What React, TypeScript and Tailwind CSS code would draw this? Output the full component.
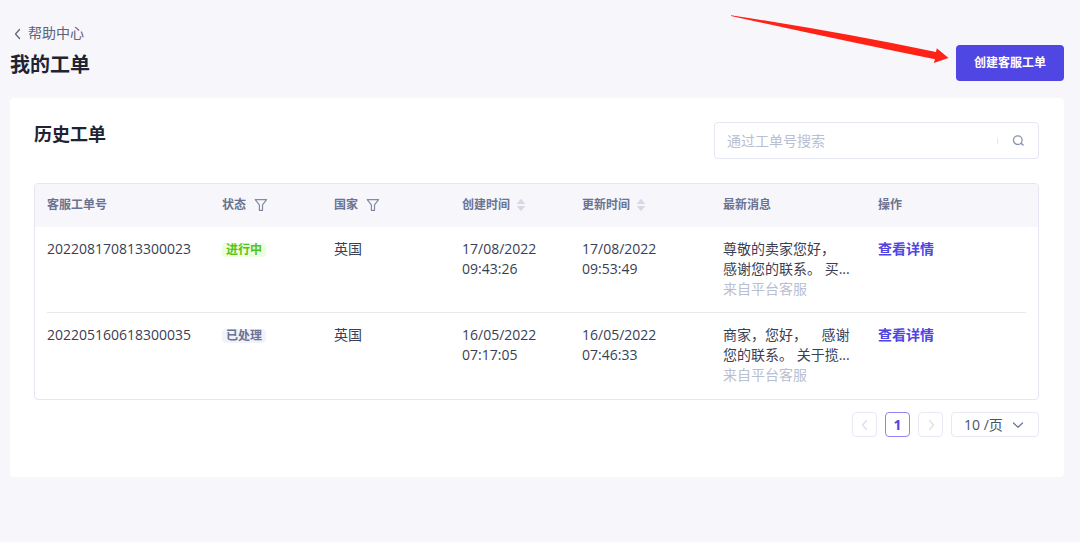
import { useState } from "react";

interface Ticket {
  id: string;
  status: "processing" | "done";
  country: string;
  created: [string, string];
  updated: [string, string];
  message: [string, string];
  source: string;
}

const TICKETS: Ticket[] = [
  {
    id: "202208170813300023",
    status: "processing",
    country: "英国",
    created: ["17/08/2022", "09:43:26"],
    updated: ["17/08/2022", "09:53:49"],
    message: ["尊敬的卖家您好，", "感谢您的联系。 买..."],
    source: "来自平台客服",
  },
  {
    id: "202205160618300035",
    status: "done",
    country: "英国",
    created: ["16/05/2022", "07:17:05"],
    updated: ["16/05/2022", "07:46:33"],
    message: ["商家，您好，    感谢", "您的联系。 关于揽..."],
    source: "来自平台客服",
  },
];

function FilterIcon() {
  return (
    <svg
      width="14"
      height="14"
      viewBox="0 0 14 14"
      className="text-[#838aa3]"
      fill="none"
      stroke="currentColor"
      strokeWidth="1.2"
      strokeLinejoin="round"
    >
      <path d="M1.2 1.6h11.4L8.5 6.8v5.6H5.4V6.8z" />
    </svg>
  );
}

function SortIcon() {
  return (
    <svg width="10" height="14" viewBox="0 0 10 14" className="text-[#d6d8e3]" fill="currentColor">
      <path d="M5 .8 9 5.4a.3.3 0 0 1-.2.5H1.2a.3.3 0 0 1-.2-.5z" />
      <path d="M5 13.2 9 8.6a.3.3 0 0 0-.2-.5H1.2a.3.3 0 0 0-.2.5z" />
    </svg>
  );
}

function Chevron({ d, className }: { d: string; className?: string }) {
  return (
    <svg
      width="12"
      height="12"
      viewBox="0 0 12 12"
      className={className}
      fill="none"
      stroke="currentColor"
      strokeWidth="1.2"
      strokeLinecap="round"
      strokeLinejoin="round"
    >
      <path d={d} />
    </svg>
  );
}

function StatusTag({ status }: { status: Ticket["status"] }) {
  return status === "processing" ? (
    <span className="inline-block rounded bg-[#ecfde0] px-1 text-xs leading-[14px] font-bold text-[#52c41a]">进行中</span>
  ) : (
    <span className="inline-block rounded bg-[#f1f2fa] px-1 text-xs leading-[14px] font-bold text-[#6a7391]">已处理</span>
  );
}

function Pager() {
  const [size, setSize] = useState("10");
  return (
    <nav className="mt-3 flex justify-end gap-2" aria-label="分页">
      <button type="button" disabled aria-label="上一页" className="flex size-[25px] items-center justify-center rounded border border-[#e8e9f5] text-[#dcdeeb]">
        <Chevron d="M7.5 1.5 3.5 6l4 4.5" />
      </button>
      <button type="button" className="size-[25px] rounded border border-[#8f86f0] text-sm leading-5 font-bold text-[#5046e4]">
        1
      </button>
      <button type="button" disabled aria-label="下一页" className="flex size-[25px] items-center justify-center rounded border border-[#e8e9f5] text-[#dcdeeb]">
        <Chevron d="m4.5 1.5 4 4.5-4 4.5" />
      </button>
      <div className="relative">
        <select
          aria-label="每页条数"
          value={size}
          onChange={(e) => setSize(e.target.value)}
          className="block h-[25px] w-22 appearance-none rounded-sm border border-[#e8e9f5] bg-white pl-3 text-sm leading-5 text-[#4a5168] outline-none"
        >
          <option value="10">10 /页</option>
          <option value="20">20 /页</option>
          <option value="50">50 /页</option>
        </select>
        <Chevron d="M1.5 4 6 8.2 10.5 4" className="pointer-events-none absolute top-[7px] right-[15px] text-[#6a7391]" />
      </div>
    </nav>
  );
}

export default function App() {
  const [query, setQuery] = useState("");

  return (
    <div className="min-h-screen bg-[#f6f6fb] pt-[23px] pr-4 pb-10 pl-[10px] font-['Open_Sans','Noto_Sans_CJK_SC',sans-serif] text-sm leading-5 text-[#3a4054]">
      <header className="relative flex items-end justify-between">
        <div>
          <a href="#help" className="flex items-center text-[#5c647a]">
            <Chevron d="M7.5 1.5 3.5 6l4 4.5" className="mt-0.5 mr-1 ml-0.5" />
            帮助中心
          </a>
          <h1 className="mt-1.5 text-xl leading-8 font-bold text-[#1f2433]">我的工单</h1>
        </div>
        <button type="button" className="h-9 rounded bg-[#5046e4] px-[18px] text-xs font-bold text-white">
          创建客服工单
        </button>
        <svg className="pointer-events-none absolute -top-[9px] right-[115px]" width="219" height="50" viewBox="730 14 219 50" fill="#ff2216" aria-hidden="true">
          <path d="M731 15.2Q840 32 936 52l.8-3.8 11.7 9.9-14.8 5 1.4-3.8Q840 40 731 16z" />
        </svg>
      </header>

      <main className="mt-[17px] rounded bg-white pt-6 pr-[25px] pb-10 pl-6">
        <div className="flex items-start justify-between">
          <h2 className="text-lg leading-6 font-bold text-[#1f2433]">历史工单</h2>
          <form
            onSubmit={(e) => e.preventDefault()}
            className="flex h-[37px] w-[325px] items-center rounded border border-[#e4e6f3] bg-white"
          >
            <input
              type="text"
              aria-label="通过工单号搜索"
              placeholder="通过工单号搜索"
              value={query}
              onChange={(e) => setQuery(e.target.value)}
              className="min-w-0 flex-1 pl-3 outline-none placeholder:text-[#b9bed0]"
            />
            <span className="h-1.5 w-px bg-[#e4e6f3]" />
            <button type="submit" aria-label="搜索" className="flex h-full w-10 items-center justify-center text-[#8a91a9]">
              <svg width="12" height="12" viewBox="0 0 12 12" fill="none" stroke="currentColor" strokeWidth="1.3" strokeLinecap="round">
                <circle cx="5.8" cy="5.2" r="4.3" />
                <path d="m9 8.4 2.2 1.6" />
              </svg>
            </button>
          </form>
        </div>

        <div className="mt-6 overflow-hidden rounded border border-[#e4e6f3]">
          <table className="w-full table-fixed text-left">
            <colgroup>
              <col className="w-[175px]" />
              <col className="w-28" />
              <col className="w-32" />
              <col className="w-[120px]" />
              <col className="w-[141px]" />
              <col className="w-[155px]" />
              <col />
            </colgroup>
            <thead>
              <tr className="h-[43px] bg-[#f6f6fb] text-xs text-[#6a7391] *:px-3 *:pb-0.5 *:font-bold">
                <th>客服工单号</th>
                <th>
                  <div className="flex items-center gap-2">
                    状态
                    <button type="button" aria-label="筛选状态">
                      <FilterIcon />
                    </button>
                  </div>
                </th>
                <th>
                  <div className="flex items-center gap-2">
                    国家
                    <button type="button" aria-label="筛选国家">
                      <FilterIcon />
                    </button>
                  </div>
                </th>
                <th>
                  <div className="flex items-center gap-1.5">
                    创建时间
                    <button type="button" aria-label="按创建时间排序">
                      <SortIcon />
                    </button>
                  </div>
                </th>
                <th>
                  <div className="flex items-center gap-1.5">
                    更新时间
                    <button type="button" aria-label="按更新时间排序">
                      <SortIcon />
                    </button>
                  </div>
                </th>
                <th>最新消息</th>
                <th>操作</th>
              </tr>
            </thead>
            {/* the row divider stops short of the table edge on both sides */}
            <tbody className="[&_td]:relative [&_td]:px-3 [&_td]:pt-3 [&_tr:not(:last-child)_td]:after:absolute [&_tr:not(:last-child)_td]:after:inset-x-0 [&_tr:not(:last-child)_td]:after:bottom-0 [&_tr:not(:last-child)_td]:after:h-px [&_tr:not(:last-child)_td]:after:bg-[#e8e9ee] [&_tr:not(:last-child)_td:first-child]:after:left-3 [&_tr:not(:last-child)_td:last-child]:after:right-3">
              {TICKETS.map((ticket) => (
                <tr key={ticket.id} className="h-[86px] align-top">
                  <td>{ticket.id}</td>
                  <td>
                    <StatusTag status={ticket.status} />
                  </td>
                  <td>{ticket.country}</td>
                  <td>
                    {ticket.created[0]}
                    <br />
                    {ticket.created[1]}
                  </td>
                  <td>
                    {ticket.updated[0]}
                    <br />
                    {ticket.updated[1]}
                  </td>
                  <td className="whitespace-pre">
                    {ticket.message[0]}
                    <br />
                    {ticket.message[1]}
                    <br />
                    <span className="text-[#b9bed0]">{ticket.source}</span>
                  </td>
                  <td>
                    <a href={`#ticket-${ticket.id}`} className="font-bold text-[#5046e4]">
                      查看详情
                    </a>
                  </td>
                </tr>
              ))}
            </tbody>
          </table>
        </div>

        <Pager />
      </main>
    </div>
  );
}
